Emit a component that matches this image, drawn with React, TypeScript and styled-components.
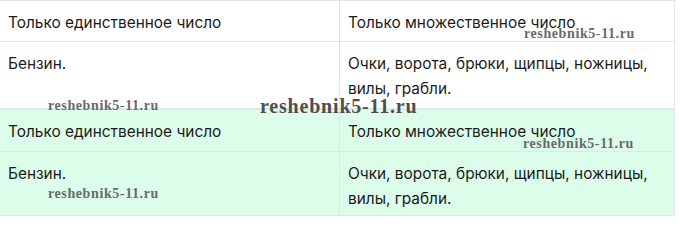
import React from 'react';
import styled, { createGlobalStyle } from 'styled-components';

const GlobalStyle = createGlobalStyle`
  html, body {
    margin: 0;
    padding: 0;
    background: #ffffff;
  }
  body {
    font-family: 'Inter', 'Noto Sans', sans-serif;
    color: #1b1b1b;
  }
`;

const Page = styled.div`
  position: relative;
  width: 680px;
  height: 247px;
  overflow: hidden;
`;

const Table = styled.div<{ $green?: boolean }>`
  display: grid;
  grid-template-columns: 339px 1fr;
  width: 674px;
  background: ${(p) => (p.$green ? '#dcfde9' : '#ffffff')};
  border-top: 1px solid #e4e6e5;
  border-right: 1px solid #e4e6e5;
`;

const Cell = styled.div<{ $h: number; $last?: boolean }>`
  height: ${(p) => p.$h}px;
  box-sizing: border-box;
  padding: 9px 8px 0 8px;
  font-size: 15.4px;
  line-height: 25px;
  border-bottom: 1px solid #e4e6e5;
  border-left: ${(p) => (p.$last ? '1px solid #e4e6e5' : 'none')};
`;

const Mark = styled.span<{ $big?: boolean }>`
  position: absolute;
  font-family: 'Liberation Serif', 'DejaVu Serif', serif;
  font-weight: bold;
  font-size: ${(p) => (p.$big ? 20 : 14)}px;
  line-height: 1;
  color: ${(p) => (p.$big ? '#4e4e4e' : '#6a6a6a')};
  letter-spacing: ${(p) => (p.$big ? 0.8 : 0.6)}px;
  pointer-events: none;
  white-space: nowrap;
`;

const rows = [
  { left: 'Только единственное число', right: 'Только множественное число', h: 41 },
  { left: 'Бензин.', right: 'Очки, ворота, брюки, щипцы, ножницы, вилы, грабли.', h: 67 },
];

const greenRows = [
  { left: 'Только единственное число', right: 'Только множественное число', h: 42 },
  { left: 'Бензин.', right: 'Очки, ворота, брюки, щипцы, ножницы, вилы, грабли.', h: 64 },
];

const marks = [
  { x: 524, y: 27, big: false },
  { x: 48, y: 99, big: false },
  { x: 260, y: 96, big: true },
  { x: 523, y: 137, big: false },
  { x: 48, y: 187, big: false },
];

export default function App() {
  return (
    <>
      <GlobalStyle />
      <Page>
        <Table>
          {rows.map((r, i) => (
            <React.Fragment key={i}>
              <Cell $h={r.h}>{r.left}</Cell>
              <Cell $h={r.h} $last>{r.right}</Cell>
            </React.Fragment>
          ))}
        </Table>
        <Table $green>
          {greenRows.map((r, i) => (
            <React.Fragment key={i}>
              <Cell $h={r.h}>{r.left}</Cell>
              <Cell $h={r.h} $last>{r.right}</Cell>
            </React.Fragment>
          ))}
        </Table>
        {marks.map((m, i) => (
          <Mark key={i} $big={m.big} style={{ left: m.x, top: m.y }}>
            reshebnik5-11.ru
          </Mark>
        ))}
      </Page>
    </>
  );
}
